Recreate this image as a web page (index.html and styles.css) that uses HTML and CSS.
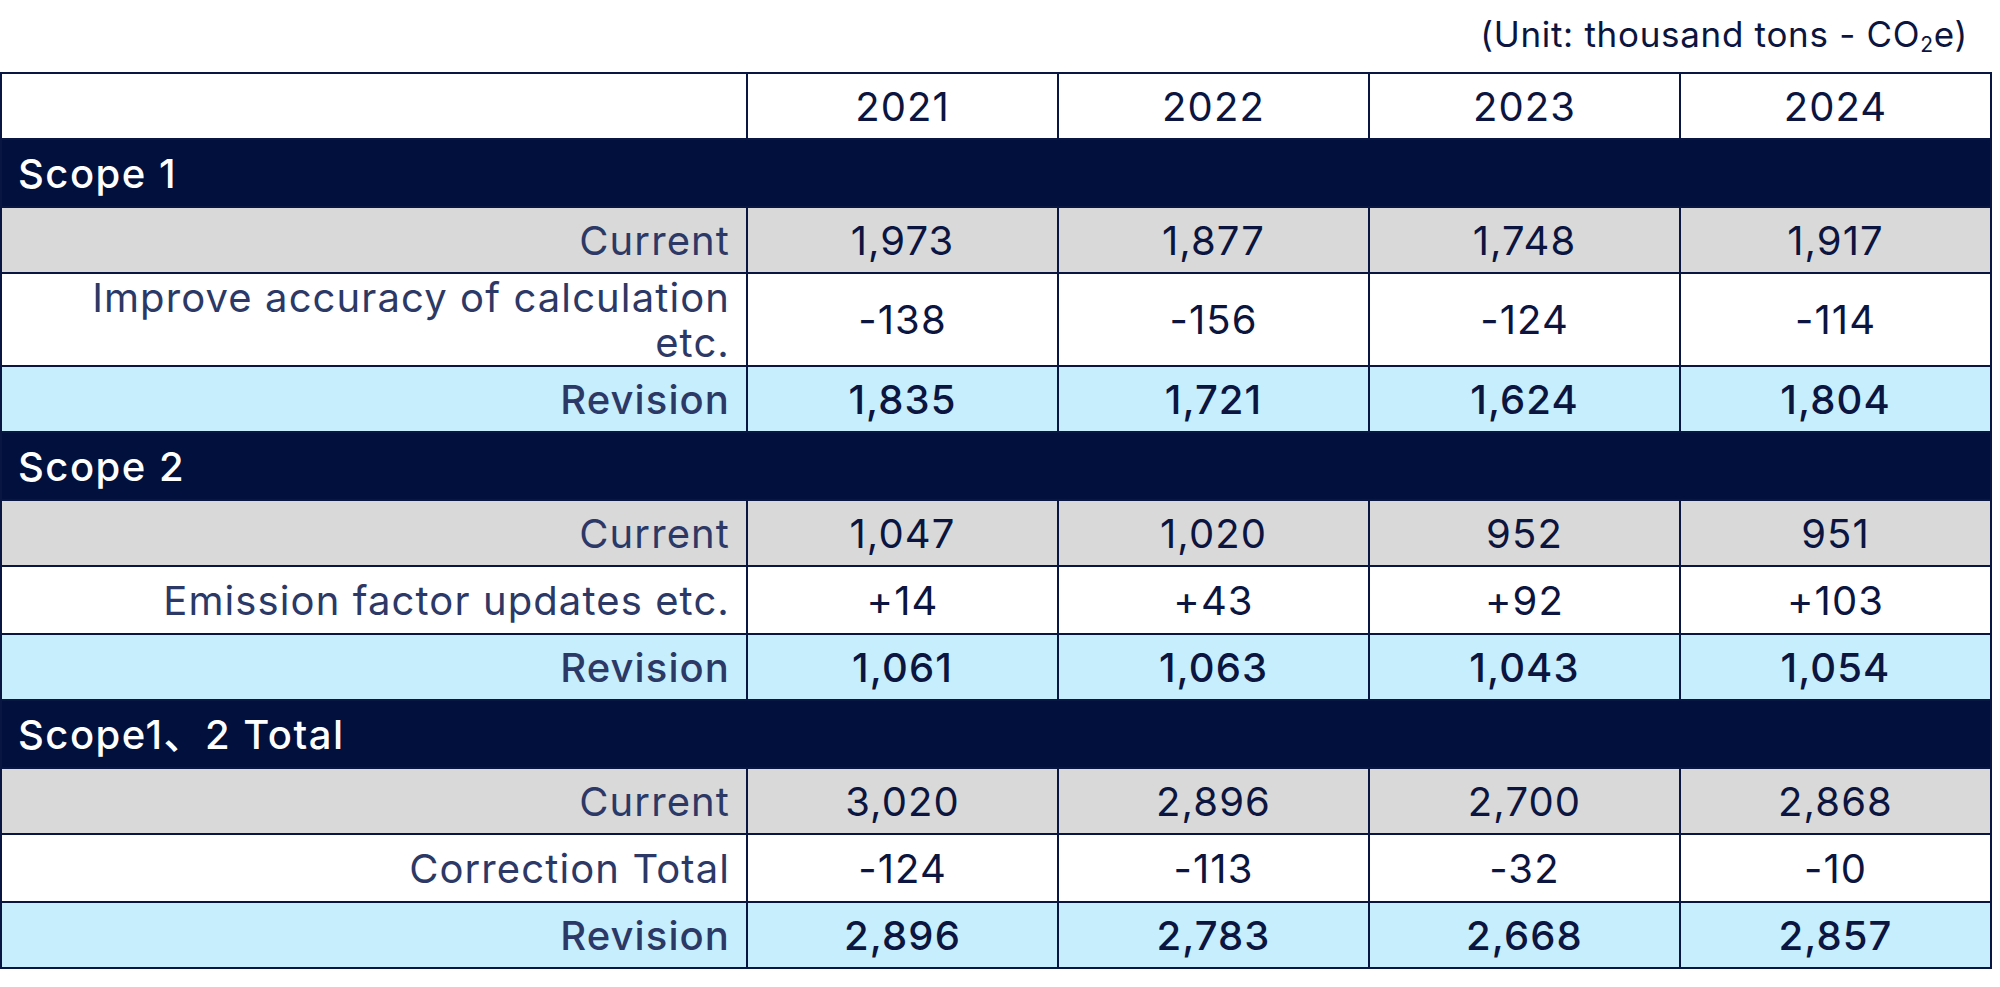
FILE: index.html
```html
<!DOCTYPE html>
<html lang="en">
<head>
<meta charset="utf-8">
<title>Scope emissions revision</title>
<link rel="stylesheet" href="styles.css">
</head>
<body>
<div class="page">
  <div class="unit">(Unit: thousand tons - CO<sub>2</sub>e)</div>
  <table class="data">
    <colgroup>
      <col class="c-label">
      <col class="c-year">
      <col class="c-year">
      <col class="c-year">
      <col class="c-year">
    </colgroup>
    <thead>
      <tr class="head">
        <th></th><th>2021</th><th>2022</th><th>2023</th><th>2024</th>
      </tr>
    </thead>
    <tbody>
      <tr class="band"><td colspan="5">Scope 1</td></tr>
      <tr class="cur"><th>Current</th><td>1,973</td><td>1,877</td><td>1,748</td><td>1,917</td></tr>
      <tr class="adj tall"><th>Improve accuracy of calculation etc.</th><td>-138</td><td>-156</td><td>-124</td><td>-114</td></tr>
      <tr class="rev"><th>Revision</th><td>1,835</td><td>1,721</td><td>1,624</td><td>1,804</td></tr>

      <tr class="band"><td colspan="5">Scope 2</td></tr>
      <tr class="cur"><th>Current</th><td>1,047</td><td>1,020</td><td>952</td><td>951</td></tr>
      <tr class="adj"><th>Emission factor updates etc.</th><td>+14</td><td>+43</td><td>+92</td><td>+103</td></tr>
      <tr class="rev"><th>Revision</th><td>1,061</td><td>1,063</td><td>1,043</td><td>1,054</td></tr>

      <tr class="band"><td colspan="5">Scope1、2 Total</td></tr>
      <tr class="cur"><th>Current</th><td>3,020</td><td>2,896</td><td>2,700</td><td>2,868</td></tr>
      <tr class="adj"><th>Correction Total</th><td>-124</td><td>-113</td><td>-32</td><td>-10</td></tr>
      <tr class="rev"><th>Revision</th><td>2,896</td><td>2,783</td><td>2,668</td><td>2,857</td></tr>
    </tbody>
  </table>
</div>
</body>
</html>
```

FILE: styles.css
```css
html, body {
  margin: 0;
  padding: 0;
  background: #ffffff;
}

body {
  font-family: Inter, "Noto Sans CJK JP", sans-serif;
  color: #0b1540;
}

.page {
  width: 1990px;
}

.unit {
  height: 72px;
  box-sizing: border-box;
  padding: 13px 22px 0 0;
  text-align: right;
  font-size: 35px;
  letter-spacing: 0.7px;
  line-height: 42px;
  color: #0b1540;
}

.unit sub {
  font-size: 0.6em;
  line-height: 0;
  vertical-align: -0.25em;
}

.data {
  width: 1990px;
  border-collapse: collapse;
  table-layout: fixed;
  font-size: 40px;
  letter-spacing: 1.1px;
  line-height: 45px;
}

.c-label { width: 746px; }
.c-year { width: 311px; }

.data th,
.data td {
  border: 2px solid #0a1642;
  padding: 0 16px;
  font-weight: 400;
}

.data td {
  text-align: center;
  color: #0b1540;
}

.data tbody th {
  text-align: right;
  color: #2c3966;
}

.head th {
  height: 64px;
  background: #ffffff;
  color: #0b1540;
  text-align: center;
}

.band td {
  height: 66px;
  background: #02103d;
  color: #ffffff;
  text-align: left;
  font-weight: 500;
  letter-spacing: 1.5px;
  padding-left: 16px;
}

.cur th,
.cur td {
  height: 64px;
  background: #d9d9d9;
}

.adj th,
.adj td {
  height: 66px;
  background: #ffffff;
}

.adj.tall th,
.adj.tall td {
  height: 91px;
}

.rev th,
.rev td {
  height: 64px;
  background: #c6eefc;
  font-weight: 500;
}
```
